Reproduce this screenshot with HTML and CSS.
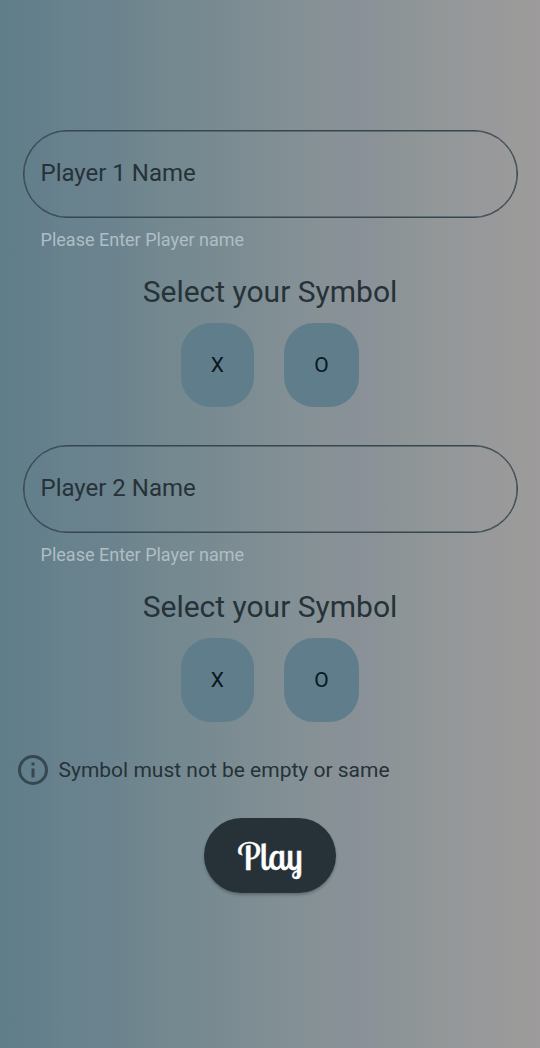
FILE: index.html
```html
<!DOCTYPE html>
<html lang="en">
<head>
<meta charset="utf-8">
<title>Player setup</title>
<link rel="stylesheet" href="styles.css">
</head>
<body>
<main class="screen">
  <section class="player">
    <div class="field">Player 1 Name</div>
    <p class="helper">Please Enter Player name</p>
    <h2 class="heading"><span>Select your Symbol</span></h2>
    <div class="symbols">
      <button class="symbol symbol-x"><span>X</span></button>
      <button class="symbol symbol-o"><span>O</span></button>
    </div>
  </section>
  <section class="player">
    <div class="field">Player 2 Name</div>
    <p class="helper">Please Enter Player name</p>
    <h2 class="heading"><span>Select your Symbol</span></h2>
    <div class="symbols">
      <button class="symbol symbol-x"><span>X</span></button>
      <button class="symbol symbol-o"><span>O</span></button>
    </div>
  </section>
  <div class="notice">
    <svg class="info" viewBox="0 0 30 30" aria-hidden="true">
      <circle cx="15" cy="15" r="13.5" fill="none" stroke="currentColor" stroke-width="3"/>
      <path d="M13.5 7.5h3v3h-3zM13.5 13.5h3v9h-3z" fill="currentColor"/>
    </svg>
    <span class="notice-text">Symbol must not be empty or same</span>
  </div>
  <button class="play"><span class="play-label">Play</span></button>
</main>
</body>
</html>
```
FILE: styles.css
```css
* { box-sizing: border-box; }
body { margin: 0; font-family: Roboto, sans-serif; color: #263238; }
button { border: 0; padding: 0; font-family: inherit; }
.screen {
  width: 540px;
  height: 1048px;
  padding-top: 129px;
  display: flex;
  flex-direction: column;
  background: linear-gradient(90deg, #607e8b 0, #617f8a 15px, #637f8b 36px, #67818d 60px, #6b838f 110px, #70868e 140px, #778a91 200px, #7c8c92 240px, #829095 285px, #879196 325px, #8a9198 370px, #8c9497 388px, #909697 420px, #96989a 468px, #99999b 495px, #9b9b9a 518px, #9d9b9b 540px);
}
.player { height: 315px; display: flex; flex-direction: column; }
.field {
  height: 88px;
  margin: .5px 22.5px 0;
  padding-left: 17px;
  border: 1px solid #37474f;
  border-radius: 45px;
  box-shadow: inset 0 0 0 .5px #37474f;
  font-size: 24px;
  line-height: 84px;
}
.helper {
  margin: 11px 0 0 40.6px;
  font-size: 18px;
  line-height: 21px;
  color: #b0bec5;
}
.heading {
  margin: 24.5px 0 0;
  font-size: 30px;
  font-weight: 400;
  line-height: 36px;
  text-align: center;
}
.symbols { margin-top: 13px; padding-left: 180.5px; display: flex; gap: 30px; }
.symbol {
  height: 84px;
  border-radius: 30px;
  background: #607d8b;
  color: #0b171c;
  font-size: 21px;
}
.symbol-x { width: 73.5px; }
.symbol-o { width: 75px; }
.notice {
  height: 30px;
  margin: -4px 0 0 18px;
  display: flex;
  align-items: center;
  gap: 10.5px;
}
.info { width: 30px; height: 30px; color: #37474f; }
.notice-text { font-size: 21px; }
.play {
  width: 132px;
  height: 75px;
  margin-top: 33px;
  align-self: center;
  border-radius: 38px;
  background: #263238;
  box-shadow: 0 2px 3px rgba(0, 0, 0, .26);
  color: #fff;
}
.play-label {
  font-family: "Lobster Two", "Lobster", cursive;
  font-size: 37.5px;
  font-weight: 400;
  -webkit-text-stroke: .4px #fff;
}
```
